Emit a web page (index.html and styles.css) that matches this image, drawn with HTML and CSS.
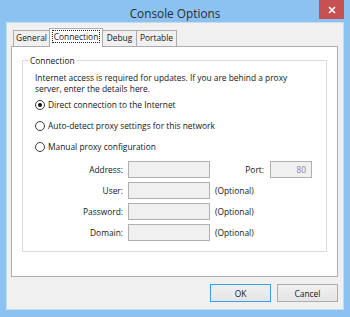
FILE: index.html
```html
<!DOCTYPE html>
<html lang="en">
<head>
    <meta charset="UTF-8">
    <title>Console Options</title>
    <link rel="stylesheet" href="styles.css">
</head>
<body>
    <div class="window">
        <header class="titlebar">
            <span></span>
            <h1 class="title">Console Options</h1>
            <button class="close" aria-label="Close">
                <svg width="8" height="8" viewBox="0 0 8 8">
                    <path d="M1 1 L7 7 M7 1 L1 7" stroke="#fff" stroke-width="1.6"/>
                </svg>
            </button>
        </header>

        <div class="client">
            <div class="tabs">
                <div class="tab tab-general">General</div>
                <div class="tab tab-connection active"><span class="focus">Connection</span></div>
                <div class="tab tab-debug">Debug</div>
                <div class="tab tab-portable">Portable</div>
            </div>

            <div class="panel">
                <fieldset class="group">
                    <legend>Connection</legend>
                    <p class="intro">Internet access is required for updates. If you are behind a proxy server, enter the details here.</p>

                    <label class="radio-row"><span class="radio checked"></span>Direct connection to the Internet</label>
                    <label class="radio-row"><span class="radio"></span>Auto-detect proxy settings for this network</label>
                    <label class="radio-row"><span class="radio"></span>Manual proxy configuration</label>

                    <div class="fields">
                        <span class="field-label">Address:</span>
                        <span class="input"></span>
                        <span class="port">
                            <span class="field-label">Port:</span>
                            <span class="input input-port">80</span>
                        </span>

                        <span class="field-label">User:</span>
                        <span class="input"></span>
                        <span class="optional">(Optional)</span>

                        <span class="field-label">Password:</span>
                        <span class="input"></span>
                        <span class="optional">(Optional)</span>

                        <span class="field-label">Domain:</span>
                        <span class="input"></span>
                        <span class="optional">(Optional)</span>
                    </div>
                </fieldset>
            </div>

            <div class="buttons">
                <button class="btn btn-default">OK</button>
                <button class="btn">Cancel</button>
            </div>
        </div>
    </div>
</body>
</html>
```

FILE: styles.css
```css
:root {
    --frame-color: #8bc2f2;
    --client-color: #f0f0f0;
    --text-color: #161616;
    --tab-border: #acacac;
    --group-border: #dcdcdc;
}

* {
    margin: 0;
    padding: 0;
    box-sizing: border-box;
}

body {
    font-family: 'Open Sans', 'Noto Sans', sans-serif;
    font-size: 8.4px;
    color: var(--text-color);
    background-color: var(--frame-color);
}

.window {
    width: 350px;
    height: 317px;
    background-color: var(--frame-color);
    display: flex;
    flex-direction: column;
}

.titlebar {
    height: 23px;
    display: grid;
    grid-template-columns: 1fr auto 1fr;
    align-items: start;
}

.title {
    font-size: 11.8px;
    font-weight: 400;
    color: #2d2d2d;
    padding-top: 5px;
    line-height: 16px;
}

.close {
    justify-self: end;
    margin-right: 6px;
    width: 25px;
    height: 19px;
    border: none;
    background-color: #c75050;
    display: flex;
    align-items: center;
    justify-content: center;
}

.client {
    margin: 0 6px 7px 6px;
    height: 288px;
    background-color: var(--client-color);
    border: 1px solid #c3dcf3;
    padding: 5px 5px 7px 4px;
    display: flex;
    flex-direction: column;
}

/* tab strip */
.tabs {
    height: 18px;
    display: flex;
    align-items: flex-end;
    padding-left: 2px;
}

.tab {
    height: 16px;
    border: 1px solid var(--tab-border);
    border-bottom: none;
    background-color: #f0f0f0;
    text-align: center;
    line-height: 14px;
    margin-left: -1px;
}

.tab-general { width: 37px; margin-left: 0; }
.tab-connection { width: 54px; }
.tab-debug { width: 35px; }
.tab-portable { width: 41px; }

.tab.active {
    height: 19px;
    margin-bottom: -1px;
    background-color: #fff;
    position: relative;
    z-index: 1;
    line-height: 16px;
}

.focus {
    outline: 1px dotted #222;
    outline-offset: 0;
    padding: 0 1px;
}

.panel {
    height: 231px;
    background-color: #fff;
    border: 1px solid var(--tab-border);
    padding: 8px 10px 0 10px;
}

/* group box */
.group {
    height: 197px;
    border: 1px solid var(--group-border);
    padding: 6px 12px 0 12px;
}

.group legend {
    margin-left: -7px;
    padding: 0 2px;
    line-height: 11px;
}

.intro {
    line-height: 11px;
    width: 272px;
}

.radio-row {
    height: 21px;
    display: flex;
    align-items: center;
    gap: 3px;
}

.radio {
    width: 10px;
    height: 10px;
    border: 1px solid #3c3c3c;
    border-radius: 50%;
    background-color: #fff;
    display: flex;
    align-items: center;
    justify-content: center;
}

.radio.checked::after {
    content: "";
    width: 4px;
    height: 4px;
    border-radius: 50%;
    background-color: #111;
}

/* proxy fields */
.fields {
    display: grid;
    grid-template-columns: 88px 82px 97px;
    column-gap: 5px;
    row-gap: 4px;
    margin-top: 4px;
    align-items: center;
}

.field-label {
    text-align: right;
}

.input {
    height: 17px;
    border: 1px solid #b0b0b0;
    background-color: #f0f0f0;
    color: #8a8a8a;
    text-align: right;
    padding-right: 5px;
    line-height: 15px;
}

.port {
    display: flex;
    align-items: center;
    justify-content: flex-end;
    gap: 6px;
}

.input-port {
    width: 42px;
}

.buttons {
    margin-top: 7px;
    display: flex;
    justify-content: flex-end;
    gap: 6px;
}

.btn {
    width: 61px;
    height: 18px;
    font-family: inherit;
    font-size: 8.4px;
    color: var(--text-color);
    border: 1px solid var(--tab-border);
    background: linear-gradient(#f0f0f0, #e5e5e5);
}

.btn-default {
    border-color: #3c9cf0;
}
```
